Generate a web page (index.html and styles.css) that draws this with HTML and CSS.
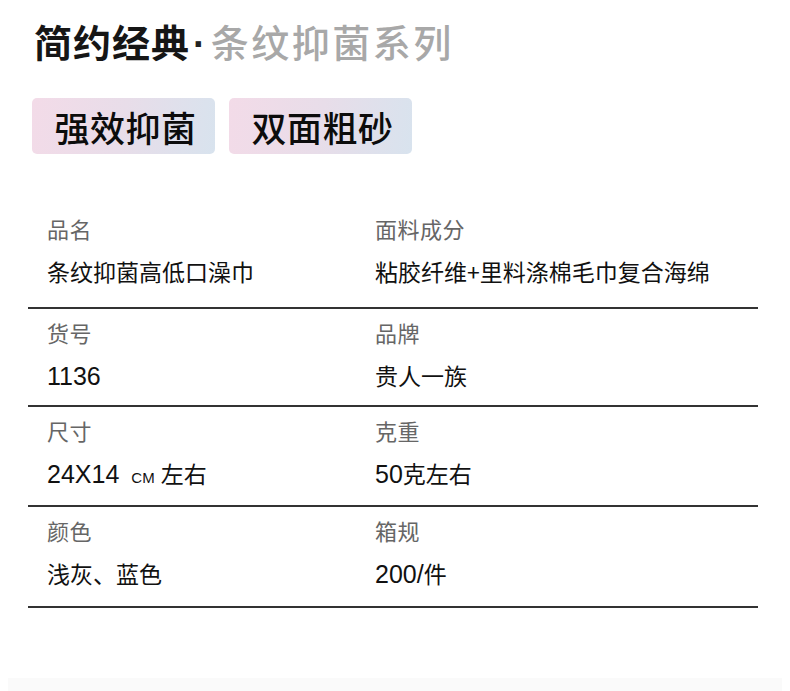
FILE: index.html
```html
<!DOCTYPE html>
<html lang="zh-CN">
<head>
<meta charset="utf-8">
<title>简约经典·条纹抑菌系列</title>
<link rel="stylesheet" href="styles.css">
</head>
<body>
<div class="page">
  <h1 class="title"><span class="title-main">简约经典</span><span class="title-dot">·</span><span class="title-sub">条纹抑菌系列</span></h1>
  <div class="tags">
    <div class="tag">强效抑菌</div>
    <div class="tag">双面粗砂</div>
  </div>
  <div class="spec">
    <div class="spec-row">
      <div class="cell cell-left"><div class="label">品名</div><div class="value">条纹抑菌高低口澡巾</div></div>
      <div class="cell cell-right"><div class="label">面料成分</div><div class="value">粘胶纤维+里料涤棉毛巾复合海绵</div></div>
    </div>
    <div class="spec-row">
      <div class="cell cell-left"><div class="label">货号</div><div class="value"><span class="num">1136</span></div></div>
      <div class="cell cell-right"><div class="label">品牌</div><div class="value">贵人一族</div></div>
    </div>
    <div class="spec-row">
      <div class="cell cell-left"><div class="label">尺寸</div><div class="value"><span class="num">24X14</span><span class="unit">CM</span>左右</div></div>
      <div class="cell cell-right"><div class="label">克重</div><div class="value"><span class="num">50</span>克左右</div></div>
    </div>
    <div class="spec-row">
      <div class="cell cell-left"><div class="label">颜色</div><div class="value">浅灰、蓝色</div></div>
      <div class="cell cell-right"><div class="label">箱规</div><div class="value"><span class="num">200/</span>件</div></div>
    </div>
  </div>
  <div class="footer-band"></div>
</div>
</body>
</html>
```
FILE: styles.css
```css
* { box-sizing: border-box; }
html, body { margin: 0; padding: 0; background: #ffffff; }
body {
  font-family: "Noto Sans CJK SC", "Noto Sans", sans-serif;
  color: #111;
  width: 790px;
  height: 691px;
  overflow: hidden;
}
.page {
  display: flex;
  flex-direction: column;
  height: 691px;
}
.title {
  margin: 13px 0 0 34px;
  height: 56px;
  font-size: 38px;
  line-height: 56px;
  font-weight: 700;
  letter-spacing: 1px;
  white-space: nowrap;
}
.title-main { color: #161616; }
.title-dot {
  font-family: "Liberation Sans", Arial, sans-serif;
  line-height: 0;
  color: #222;
  margin: 0 4px 0 3px;
}
.title-sub { color: #a8a8a8; font-weight: 500; letter-spacing: 2.5px; }

.tags {
  display: flex;
  gap: 14px;
  margin: 29px 0 0 32px;
}
.tag {
  width: 183px;
  height: 56px;
  border-radius: 5px;
  background: linear-gradient(100deg, #f3dbe8 0%, #e8dde9 50%, #d8e3ee 100%);
  display: flex;
  align-items: center;
  justify-content: center;
  padding-left: 4px;
  font-size: 35px;
  font-weight: 500;
  color: #0c0c0c;
  letter-spacing: 0.5px;
}

.spec {
  margin: 55px 32px 0 28px;
  display: flex;
  flex-direction: column;
}
.spec-row {
  display: grid;
  grid-template-columns: 328px 1fr;
  height: 100px;
  border-bottom: 2px solid #333;
  padding-top: 7px;
}
.spec-row:first-child { padding-top: 3px; }
.spec-row:nth-child(2) { height: 98px; }
.spec-row:last-child { height: 101px; }
.cell { padding-left: 19px; }
.label {
  font-size: 22px;
  line-height: 32px;
  letter-spacing: 0.5px;
  color: #666;
}
.value {
  margin-top: 11px;
  font-size: 23px;
  line-height: 32px;
  color: #111;
  white-space: nowrap;
}
.num { font-family: "Liberation Sans", Arial, sans-serif; font-size: 25px; }
.unit {
  font-family: "Liberation Sans", Arial, sans-serif;
  font-size: 15px;
  margin: 0 6px 0 12px;
}

.footer-band {
  margin: auto 8px 0 8px;
  height: 13px;
  background: #fafafa;
}
```
